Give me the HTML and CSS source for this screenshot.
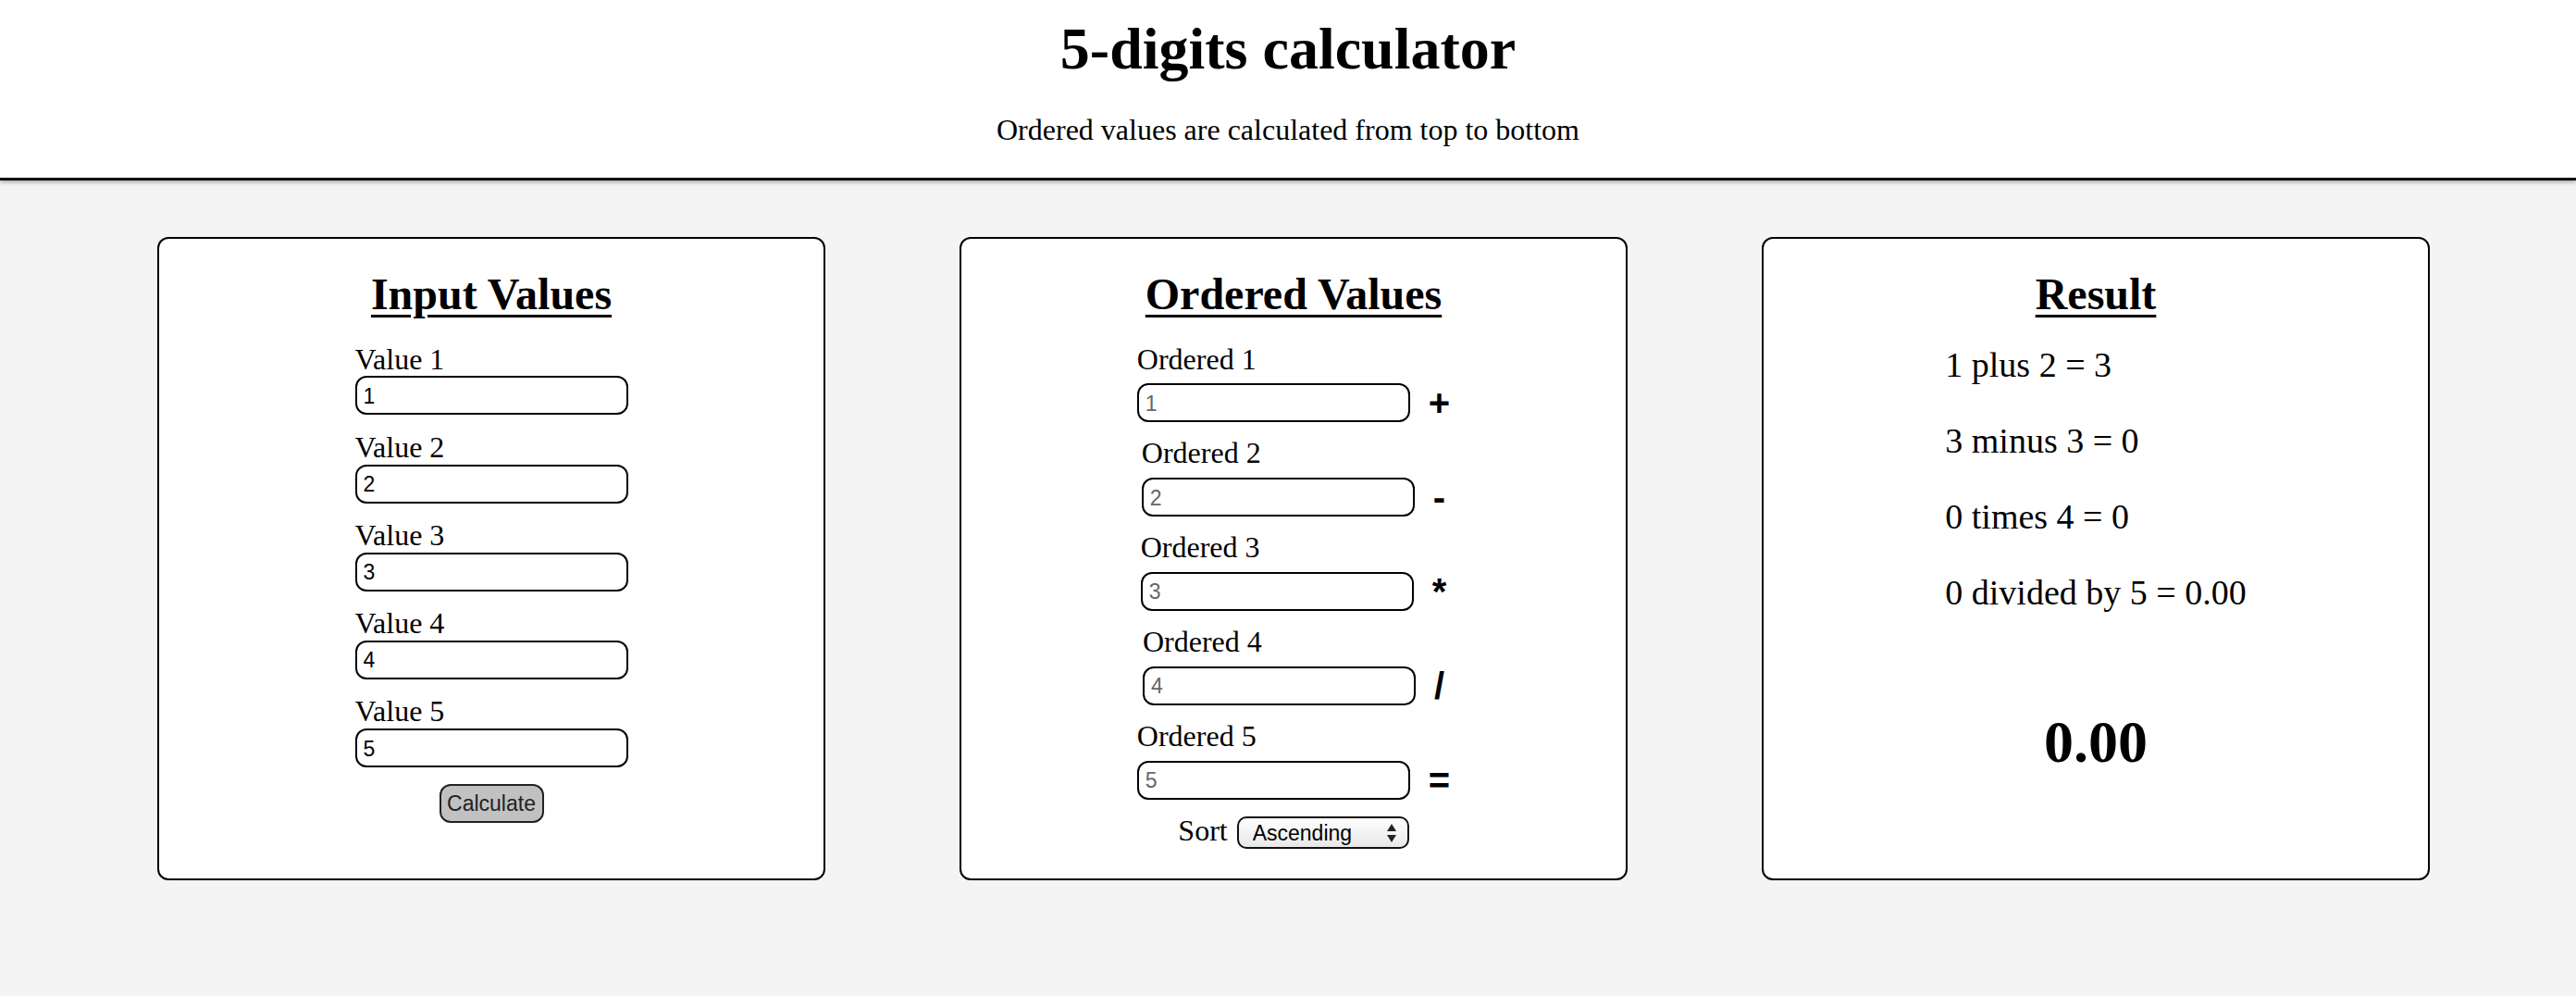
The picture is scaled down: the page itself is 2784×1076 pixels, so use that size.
FILE: index.html
```html
<!DOCTYPE html>
<html lang="en">
<head>
<meta charset="utf-8">
<title>5-digits calculator</title>
<link rel="stylesheet" href="styles.css">
</head>
<body>
<header class="site-header">
  <h1 class="site-title">5-digits calculator</h1>
  <p class="site-subtitle">Ordered values are calculated from top to bottom</p>
</header>
<main class="panels">
  <section class="card">
    <h2 class="card-title">Input Values</h2>
    <div class="field">
      <label class="field-label" for="v1">Value 1</label>
      <input class="field-input" id="v1" type="text" value="1">
    </div>
    <div class="field">
      <label class="field-label" for="v2">Value 2</label>
      <input class="field-input" id="v2" type="text" value="2">
    </div>
    <div class="field">
      <label class="field-label" for="v3">Value 3</label>
      <input class="field-input" id="v3" type="text" value="3">
    </div>
    <div class="field">
      <label class="field-label" for="v4">Value 4</label>
      <input class="field-input" id="v4" type="text" value="4">
    </div>
    <div class="field">
      <label class="field-label" for="v5">Value 5</label>
      <input class="field-input" id="v5" type="text" value="5">
    </div>
    <button class="calc-btn" type="button">Calculate</button>
  </section>

  <section class="card">
    <h2 class="card-title">Ordered Values</h2>
    <div class="ord-field">
      <label class="field-label ord-label" for="o1">Ordered 1</label>
      <div class="ord-row">
        <input class="field-input" id="o1" type="text" placeholder="1" readonly>
        <span class="op">+</span>
      </div>
    </div>
    <div class="ord-field">
      <label class="field-label ord-label" for="o2">Ordered 2</label>
      <div class="ord-row">
        <input class="field-input" id="o2" type="text" placeholder="2" readonly>
        <span class="op">-</span>
      </div>
    </div>
    <div class="ord-field">
      <label class="field-label ord-label" for="o3">Ordered 3</label>
      <div class="ord-row">
        <input class="field-input" id="o3" type="text" placeholder="3" readonly>
        <span class="op">*</span>
      </div>
    </div>
    <div class="ord-field">
      <label class="field-label ord-label" for="o4">Ordered 4</label>
      <div class="ord-row">
        <input class="field-input" id="o4" type="text" placeholder="4" readonly>
        <span class="op">/</span>
      </div>
    </div>
    <div class="ord-field">
      <label class="field-label ord-label" for="o5">Ordered 5</label>
      <div class="ord-row">
        <input class="field-input" id="o5" type="text" placeholder="5" readonly>
        <span class="op">=</span>
      </div>
    </div>
    <div class="sort-row">
      <label class="sort-label" for="sort">Sort</label>
      <span class="select-wrap">
        <select class="sort-select" id="sort">
          <option>Ascending</option>
          <option>Descending</option>
        </select>
        <svg class="select-arrows" width="10" height="20" viewBox="0 0 10 20" aria-hidden="true">
          <polygon points="5,0 10,8 0,8"/>
          <polygon points="0,12 10,12 5,20"/>
        </svg>
      </span>
    </div>
  </section>

  <section class="card">
    <h2 class="card-title">Result</h2>
    <div class="steps">
      <p class="step">1 plus 2 = 3</p>
      <p class="step">3 minus 3 = 0</p>
      <p class="step">0 times 4 = 0</p>
      <p class="step">0 divided by 5 = 0.00</p>
    </div>
    <p class="final">0.00</p>
  </section>
</main>
</body>
</html>
```
FILE: styles.css
```css
* {
  box-sizing: border-box;
}

html {
  background: #f4f4f4;
}

body {
  margin: 0;
  min-height: 1076px;
  background: #f4f4f4;
  color: #000;
  font-family: "Liberation Serif", "Times New Roman", serif;
}

.site-header {
  background: #fff;
  padding: 16px 0 34px;
  text-align: center;
  border-bottom: 3px solid #111;
  box-shadow: 0 2px 4px rgba(0, 0, 0, 0.3);
}

.site-title {
  margin: 0;
  font-size: 64px;
  line-height: 1.15;
  font-weight: bold;
}

.site-subtitle {
  margin: 32px 0 0;
  font-size: 32px;
  line-height: 1.15;
}

.panels {
  display: flex;
  align-items: flex-start;
  gap: 145px;
  padding: 61px 0 0 170px;
}

.card {
  width: 722px;
  min-height: 695px;
  background: #fff;
  border: 2px solid #000;
  border-radius: 12px;
  padding-top: 32px;
  display: flex;
  flex-direction: column;
  align-items: center;
}

.card-title {
  margin: 0 0 24px;
  font-size: 48px;
  line-height: 1.15;
  font-weight: bold;
  text-decoration: underline;
  text-decoration-thickness: 3px;
  text-underline-offset: 6px;
}

.field {
  display: flex;
  flex-direction: column;
  align-items: flex-start;
  margin-bottom: 16.4px;
}

.field-label {
  font-size: 32px;
  line-height: 1.15;
}

.field-input {
  width: 295px;
  height: 42px;
  margin: 0;
  padding: 2px 6px 0 7px;
  border: 2px solid #000;
  border-radius: 12px;
  background: #fff;
  color: #000;
  font-family: "Liberation Sans", Arial, sans-serif;
  font-size: 23px;
  outline: none;
}

.field-input::placeholder {
  color: #666;
}

.calc-btn {
  margin-top: 1.5px;
  width: 113px;
  height: 42px;
  padding: 0;
  border: 2px solid #222;
  border-radius: 12px;
  background: #c1c1c1;
  color: #222;
  font-family: "Liberation Sans", Arial, sans-serif;
  font-size: 23px;
}

.ord-field {
  display: flex;
  flex-direction: column;
  align-items: flex-start;
  margin-bottom: 15px;
}

.ord-label {
  margin-bottom: 8px;
}

.ord-row {
  display: flex;
  align-items: center;
  gap: 20px;
}

.op {
  font-family: "Liberation Sans", Arial, sans-serif;
  font-weight: bold;
  font-size: 40px;
  line-height: 1;
}

.sort-row {
  display: flex;
  align-items: baseline;
  gap: 10px;
}

.sort-label {
  font-size: 32px;
  line-height: 1.15;
}

.select-wrap {
  position: relative;
  display: inline-block;
}

.sort-select {
  -webkit-appearance: none;
  appearance: none;
  width: 186px;
  height: 35px;
  margin: 0;
  padding: 0 0 0 15px;
  border: 2px solid #111;
  border-radius: 10px;
  background: linear-gradient(#ffffff, #e8e8e8);
  color: #000;
  font-family: "Liberation Sans", Arial, sans-serif;
  font-size: 23px;
  outline: none;
}

.select-arrows {
  position: absolute;
  right: 14px;
  top: 8px;
  fill: #222;
  pointer-events: none;
}

.steps {
  margin-top: 3px;
}

.step {
  margin: 0 0 38.6px;
  font-size: 38px;
  line-height: 1.15;
}

.final {
  margin: 63px 0 0;
  font-size: 64px;
  line-height: 1.15;
  font-weight: bold;
}
```
